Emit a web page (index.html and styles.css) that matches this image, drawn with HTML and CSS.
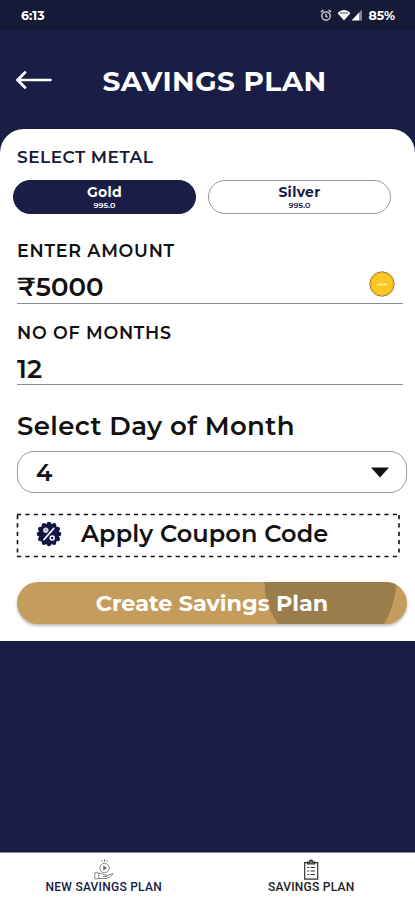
FILE: index.html
```html
<!DOCTYPE html>
<html lang="en">
<head>
<meta charset="utf-8">
<title>Savings Plan</title>
<link rel="stylesheet" href="styles.css">
</head>
<body>
<div class="status">
  <span class="time">6:13</span>
  <span class="indicators">
    <svg class="alarm" width="12" height="13" viewBox="0 0 12 13" fill="none" stroke="#ddd" stroke-width="1.3"><circle cx="6" cy="7" r="4.2"/><path d="M.8 3 3.4.9M11.2 3 8.6.9M6 4.8v2.5l1.6.9"/></svg>
    <svg width="14" height="12" viewBox="0 0 14 12"><path d="M.5 4Q7-2 13.500 4L7 11.500Z" fill="#fff"/><path d="M3 4h8" stroke="#171b38" stroke-width=".8"/></svg>
    <svg class="signal" width="12" height="12" viewBox="0 0 12 12"><path d="M.5 11.500 8.500 3v8.500Z" fill="#fff"/><path d="M8.500 3 11 .5v11H8.500" fill="#858797"/></svg>
    <span class="battery">85%</span>
  </span>
</div>
<header class="header">
  <svg class="back" width="36" height="20" viewBox="0 0 36 20" fill="none" stroke="#fff" stroke-width="2.700" stroke-linecap="round" stroke-linejoin="round"><path d="M34.500 10H2M9 2.500 1.500 10l7.500 7.500"/></svg>
  <h1 class="title">SAVINGS PLAN</h1>
</header>
<main class="panel">
  <h2 class="label metal-label">SELECT METAL</h2>
  <div class="metals">
    <button class="metal metal-on"><span class="metal-name">Gold</span><span class="purity">995.0</span></button>
    <button class="metal"><span class="metal-name">Silver</span><span class="purity">995.0</span></button>
  </div>
  <div class="field amount">
    <span class="label field-label">ENTER AMOUNT</span>
    <div class="value-row">
      <span class="value">₹5000</span>
      <svg class="coin" width="26" height="26" viewBox="0 0 26 26"><circle cx="13" cy="13" r="12.200" fill="#fcc724" stroke="#95823c" stroke-width="1"/><circle cx="13" cy="13" r="11" fill="none" stroke="#f3b51e"/><path d="M9 13.500h8.500" stroke="#fff0aa" stroke-width="2" stroke-dasharray="2.500 .5"/></svg>
    </div>
  </div>
  <div class="field months">
    <span class="label field-label">NO OF MONTHS</span>
    <div class="value-row"><span class="value">12</span></div>
  </div>
  <h2 class="day-title">Select Day of Month</h2>
  <div class="select">
    <span class="day">4</span>
    <svg width="18" height="11" viewBox="0 0 18 11"><path d="M0 .5h18L9 10.500Z" fill="#111"/></svg>
  </div>
  <div class="coupon">
    <svg class="dashes" width="385" height="45" viewBox="0 0 385 45" fill="none" stroke="#111" stroke-width="1.600" stroke-dasharray="4.200 4.150"><path d="M1 1.500H383.500M1 43.500H383.500"/><path d="M1.500 2V44M383 2V44"/></svg>
    <svg class="badge" width="26" height="26" viewBox="-13 -13 26 26">
      <g fill="#121541"><circle r="10.500"/><circle cy="-10" r="2.300"/><circle cy="10" r="2.300"/><circle cx="10" r="2.300"/><circle cx="-10" r="2.300"/><circle cx="5" cy="-8.700" r="2.300"/><circle cx="8.700" cy="-5" r="2.300"/><circle cx="8.700" cy="5" r="2.300"/><circle cx="5" cy="8.700" r="2.300"/><circle cx="-5" cy="8.700" r="2.300"/><circle cx="-8.700" cy="5" r="2.300"/><circle cx="-8.700" cy="-5" r="2.300"/><circle cx="-5" cy="-8.700" r="2.300"/></g>
      <g fill="none" stroke="#fff" stroke-width="1.500"><path d="M4.700-5.500-5 5.500" stroke-width="1.800" stroke-linecap="round"/><circle cx="-3.200" cy="-3.700" r="2" stroke="#ccd" fill="#bbc"/><circle cx="3.200" cy="4" r="2"/></g>
    </svg>
    <span class="coupon-text">Apply Coupon Code</span>
  </div>
  <button class="create">
    <svg class="ripple" width="390" height="42" viewBox="0 0 390 42"><path d="M247.500 0H379.500Q378 24 367 42H261Q247 22 247.500 0Z" fill="#9b7d4c"/></svg>
    <span class="create-text">Create Savings Plan</span>
  </button>
</main>
<nav class="nav">
  <a class="tab">
    <svg width="20" height="21" viewBox="0 0 20 21" fill="none" stroke="#888" stroke-width="1"><circle cx="10.500" cy="9" r="4.700"/><path d="M9.500 7v4l3-2Z" fill="#555"/><path d="M8 2.800V1M10.500 3V0M13 2.800V1"/><path d="M.8 13.800h4v6h-4ZM5 14.500c3-1 4 1 6 1.500h2v1.500H9M13 16.500l6-2c.5 1-4 4.500-7 5H5"/></svg>
    <span class="tab-text new">NEW SAVINGS PLAN</span>
  </a>
  <a class="tab">
    <svg width="20" height="21" viewBox="0 0 20 21" fill="none" stroke="#333" stroke-width="1.200"><path d="M6 3.700H3.700v16.500h13V3.700H14"/><path d="M6.500 5V3.200h2C8.500.5 11.800.5 11.800 3.200h2V5Z" fill="#777"/><path d="M6.300 8.500h1.800M9.500 8.500h4.500M6.300 12h1.800M9.500 12h4.500M6.300 15.500h1.800M9.500 15.500h4.500"/></svg>
    <span class="tab-text">SAVINGS PLAN</span>
  </a>
</nav>
</body>
</html>
```

FILE: styles.css
```css
* { box-sizing: border-box; }
body {
  margin: 0;
  height: 900px;
  display: flex;
  flex-direction: column;
  overflow: hidden;
  background: #1a1e46;
  color: #111;
  font-family: Montserrat, Inter, sans-serif;
}
h1, h2 { margin: 0; }
span, h1, h2 { white-space: nowrap; }
svg { display: block; flex: none; }
button { padding: 0; font-family: inherit; }

.status {
  height: 30px;
  flex: none;
  padding: 0 20px 0 21px;
  display: flex;
  align-items: center;
  justify-content: space-between;
  background: #161a36;
  color: #fff;
  font-size: 12px;
  font-weight: 700;
}
.time { font-size: 12.500px; }
.indicators { display: flex; align-items: center; }
.alarm { margin-right: 5px; }
.signal { margin-right: 5px; }
.battery { font-size: 12.500px; }

.header {
  height: 99px;
  flex: none;
  padding-left: 16px;
  display: flex;
  align-items: center;
}
.title {
  margin: 2px 0 0 50.500px;
  color: #fff;
  font-size: 28px;
  line-height: 34px;
  letter-spacing: .4px;
}

.panel {
  height: 512px;
  flex: none;
  background: #fff;
  border-radius: 24px 24px 0 0;
  display: flex;
  flex-direction: column;
}
.label {
  font-size: 17px;
  font-weight: 600;
  line-height: 20px;
}
.metal-label {
  align-self: flex-start;
  margin: 18px 0 0 17px;
  color: #181a36;
  letter-spacing: .48px;
}
.field-label { font-size: 17.500px; letter-spacing: .75px; }
.metals {
  margin: 13px 24px 0 13px;
  display: flex;
  gap: 12px;
}
.metal {
  flex: 1;
  height: 34px;
  border: 1px solid #999;
  border-radius: 17px;
  background: #fff;
  color: #191c43;
  display: flex;
  flex-direction: column;
  align-items: center;
  padding-top: 3px;
}
.metal-on { background: #1a1e46; border-color: #1a1e46; color: #fff; }
.metal-name { font-size: 14px; font-weight: 700; line-height: 17px; letter-spacing: .3px; }
.purity { font-size: 8px; font-weight: 600; line-height: 9px; }

.field {
  margin: 0 12px 0 17px;
  border-bottom: 1px solid #8c8c8c;
  display: flex;
  flex-direction: column;
  align-items: flex-start;
}
.amount { margin-top: 27px; height: 63px; }
.months { margin-top: 19px; height: 62px; }
.value-row {
  align-self: stretch;
  height: 41px;
  padding: 11px 8px 0 0;
  display: flex;
  align-items: center;
  justify-content: space-between;
}
.value { font-size: 26px; font-weight: 600; line-height: 30px; }
.coin { margin-top: -7px; }

.day-title {
  align-self: flex-start;
  margin: 25px 0 0 17px;
  font-size: 26px;
  font-weight: 600;
  line-height: 32px;
  letter-spacing: .38px;
}
.select {
  margin: 9px 8px 0 17px;
  height: 42px;
  border: 1px solid #999;
  border-radius: 17px;
  padding: 0 17px 0 18px;
  display: flex;
  align-items: center;
  justify-content: space-between;
}
.day { font-size: 24px; font-weight: 600; }

.coupon {
  position: relative;
  margin: 20px 14px 0 17px;
  height: 45px;
  padding-left: 19px;
  display: flex;
  align-items: center;
}
.dashes { position: absolute; left: -1px; top: 0; }
.coupon-text { margin: -4px 0 0 19px; font-size: 24px; font-weight: 600; letter-spacing: .1px; }
.badge { margin-top: -3px; }

.create {
  position: relative;
  margin: 24px 8px 0 17px;
  height: 42px;
  flex: none;
  border: 0;
  border-radius: 21px;
  background: #c49d5d;
  box-shadow: 0 2px 3px #bbb;
  color: #fff;
  overflow: hidden;
}
.ripple { position: absolute; left: 0; top: 0; }
.create-text { position: relative; font-size: 22.350px; font-weight: 700; line-height: 42px; }

.nav {
  margin-top: auto;
  height: 48px;
  background: #fff;
  border-top: 1px solid #888;
  display: flex;
}
.tab {
  flex: 1;
  padding-top: 6px;
  display: flex;
  flex-direction: column;
  align-items: center;
}
.tab-text {
  font-family: Roboto, sans-serif;
  font-size: 12px;
  font-weight: 500;
  line-height: 14px;
  letter-spacing: .25px;
  color: #222;
}
.new { color: #191c43; }
```
